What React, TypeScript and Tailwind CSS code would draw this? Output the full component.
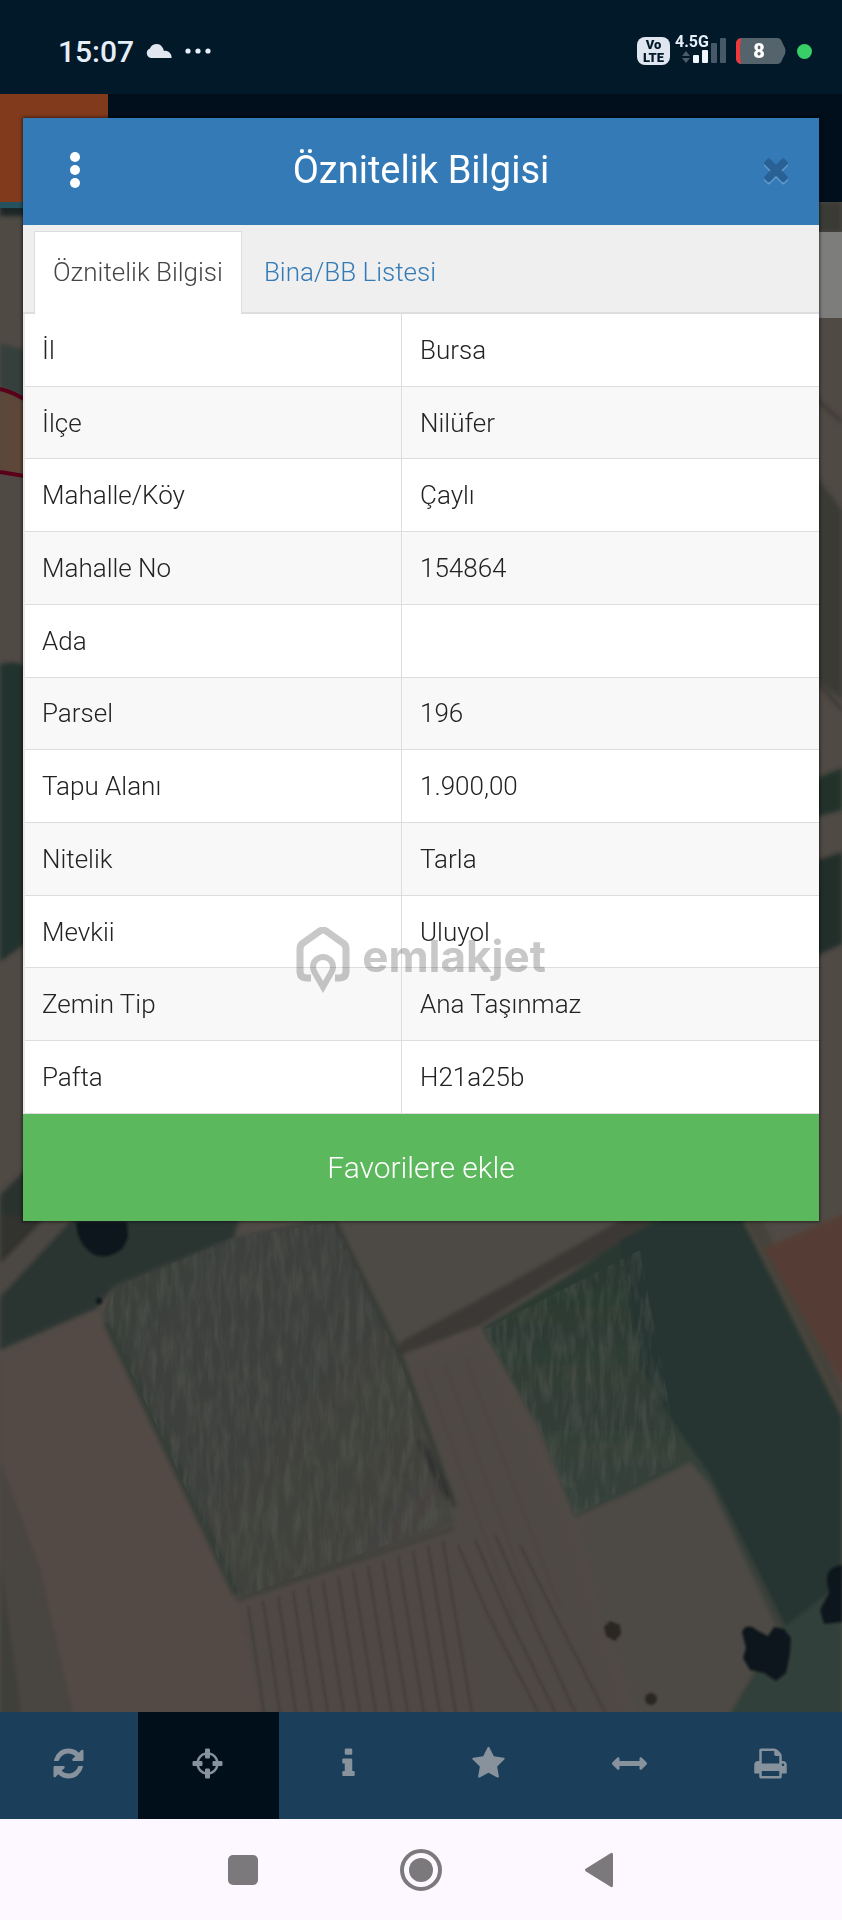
import { useState } from 'react';
import clsx from 'clsx';

const attributes = [
  { label: 'İl', value: 'Bursa' },
  { label: 'İlçe', value: 'Nilüfer' },
  { label: 'Mahalle/Köy', value: 'Çaylı' },
  { label: 'Mahalle No', value: '154864' },
  { label: 'Ada', value: '' },
  { label: 'Parsel', value: '196' },
  { label: 'Tapu Alanı', value: '1.900,00' },
  { label: 'Nitelik', value: 'Tarla' },
  { label: 'Mevkii', value: 'Uluyol' },
  { label: 'Zemin Tip', value: 'Ana Taşınmaz' },
  { label: 'Pafta', value: 'H21a25b' },
];

const tabs = ['Öznitelik Bilgisi', 'Bina/BB Listesi'];

const tools = [
  {
    name: 'Yenile',
    path: 'M1639 1056q0 5-1 7-64 268-268 434.5t-478 166.5q-146 0-282.5-55t-243.5-157l-129 129q-19 19-45 19t-45-19-19-45v-448q0-26 19-45t45-19h448q26 0 45 19t19 45-19 45l-137 137q71 66 161 102t187 36q134 0 250-65t186-179q11-17 53-117 8-23 30-23h192q13 0 22.5 9.5t9.5 22.5zm25-800v448q0 26-19 45t-45 19h-448q-26 0-45-19t-19-45 19-45l138-138q-148-137-349-137-134 0-250 65t-186 179q-11 17-53 117-8 23-30 23h-199q-13 0-22.5-9.5t-9.5-22.5v-7q65-268 270-434.5t480-166.5q146 0 284 55.5t245 156.5l130-129q19-19 45-19t45 19 19 45z',
  },
  {
    name: 'Konum',
    path: 'M1325 1024h-109q-26 0-45-19t-19-45v-128q0-26 19-45t45-19h109q-32-108-112.5-188.5t-188.5-112.5v109q0 26-19 45t-45 19h-128q-26 0-45-19t-19-45v-109q-108 32-188.5 112.5t-112.5 188.5h109q26 0 45 19t19 45v128q0 26-19 45t-45 19h-109q32 108 112.5 188.5t188.5 112.5v-109q0-26 19-45t45-19h128q26 0 45 19t19 45v109q108-32 188.5-112.5t112.5-188.5zm339-192v128q0 26-19 45t-45 19h-143q-37 161-154.5 278.5t-278.5 154.5v143q0 26-19 45t-45 19h-128q-26 0-45-19t-19-45v-143q-161-37-278.5-154.5t-154.5-278.5h-143q-26 0-45-19t-19-45v-128q0-26 19-45t45-19h143q37-161 154.5-278.5t278.5-154.5v-143q0-26 19-45t45-19h128q26 0 45 19t19 45v143q161 37 278.5 154.5t154.5 278.5h143q26 0 45 19t19 45z',
  },
  {
    name: 'Bilgi',
    path: 'M1216 1344v128q0 26-19 45t-45 19h-512q-26 0-45-19t-19-45v-128q0-26 19-45t45-19h64v-384h-64q-26 0-45-19t-19-45v-128q0-26 19-45t45-19h384q26 0 45 19t19 45v576h64q26 0 45 19t19 45zm-128-1152v192q0 26-19 45t-45 19h-256q-26 0-45-19t-19-45v-192q0-26 19-45t45-19h256q26 0 45 19t19 45z',
  },
  {
    name: 'Favoriler',
    path: 'M1728 647q0 22-26 48l-363 354 86 500q1 7 1 20 0 21-10.5 35.5t-30.5 14.5q-19 0-40-12l-449-236-449 236q-22 12-40 12-21 0-31.5-14.5t-10.5-35.5q0-6 2-20l86-500-364-354q-25-27-25-48 0-37 56-46l502-73 225-455q19-41 49-41t49 41l225 455 502 73q56 9 56 46z',
  },
  {
    name: 'Ölçüm',
    path: 'M1792 896q0 26-19 45l-256 256q-19 19-45 19t-45-19-19-45v-128h-1024v128q0 26-19 45t-45 19-45-19l-256-256q-19-19-19-45t19-45l256-256q19-19 45-19t45 19 19 45v128h1024v-128q0-26 19-45t45-19 45 19l256 256q19 19 19 45z',
  },
  {
    name: 'Yazdır',
    path: 'M448 1536h896v-256h-896v256zm0-640h896v-384h-160q-40 0-68-28t-28-68v-160h-640v640zm1152 64q0-26-19-45t-45-19-45 19-19 45 19 45 45 19 45-19 19-45zm128 0v416q0 13-9.5 22.5t-22.5 9.5h-224v160q0 40-28 68t-68 28h-960q-40 0-68-28t-28-68v-160h-224q-13 0-22.5-9.5t-9.5-22.5v-416q0-79 56.5-135.5t135.5-56.5h64v-544q0-40 28-68t68-28h672q40 0 88 20t76 48l152 152q28 28 48 76t20 88v256h64q79 0 135.5 56.5t56.5 135.5z',
  },
];

const closePath =
  'M1490 1322q0 40-28 68l-136 136q-28 28-68 28t-68-28l-294-294-294 294q-28 28-68 28t-68-28l-136-136q-28-28-28-68t28-68l294-294-294-294q-28-28-28-68t28-68l136-136q28-28 68-28t68 28l294 294 294-294q28-28 68-28t68 28l136 136q28 28 28 68t-28 68l-294 294 294 294q28 28 28 68z';

function StatusBar() {
  return (
    <div className="flex h-[94px] items-center bg-[#011929] pt-2 pr-[30px] pl-[58px] text-[#e6eef8]">
      <span className="text-[30px] font-medium">15:07</span>
      <svg className="ml-3 h-4 w-[26px]" viewBox="0 0 26 16" fill="#e2e7ef">
        <path d="M5 15a5 5 0 0 1-1-9.600A7 7 0 0 1 16.500 4.500c.8 1 1.100 2.100 1.200 3.300A6.500 6.500 0 0 1 25.500 15z" />
      </svg>
      <svg className="ml-3 h-2 w-7" viewBox="0 0 28 8" fill="currentColor">
        <circle cx="4" cy="4" r="2.600" />
        <circle cx="14" cy="4" r="2.600" />
        <circle cx="24" cy="4" r="2.600" />
      </svg>

      <div className="ml-auto flex items-center">
        <div className="flex h-7 w-[33px] flex-col items-center justify-center rounded-lg bg-[#dfe6ef] text-[13px] leading-[13px] font-black text-[#011929]">
          <span>Vo</span>
          <span>LTE</span>
        </div>
        <div className="relative ml-1 h-8 w-[54px]">
          <span className="absolute -top-px left-px text-[16px] leading-4 font-bold">4.5G</span>
          <svg className="h-8 w-[54px]" viewBox="0 0 54 32">
            <path d="M8 21l4-5 4 5zM8 23l4 5 4-5z" fill="#4b5d6a" />
            <rect x="19" y="20" width="6" height="8" rx="1" fill="#f1f6fc" />
            <rect x="28" y="15" width="6" height="13" rx="1" fill="#f1f6fc" />
            <rect x="37" y="8" width="6" height="20" rx="1" fill="#475966" />
            <rect x="46" y="3" width="6" height="25" rx="1" fill="#475966" />
          </svg>
        </div>
        <div className="relative ml-2 h-[26px] w-[50px]">
          <svg className="h-[26px] w-[50px]" viewBox="0 0 50 26">
            <path d="M6 0h35q4 0 5 4l3 6q1 3 0 6l-3 6q-1 4-5 4H6q-6 0-6-6V6q0-6 6-6z" fill="#55636d" />
            <path d="M5 0q-5 1-5 6v14q0 5 5 6-2-13 0-26z" fill="#f0383b" />
          </svg>
          <span className="absolute inset-0 pr-1 text-center text-[20px] leading-[26px] font-black text-white">8</span>
        </div>
        <span className="ml-[11px] size-[15px] rounded-full bg-[#37cf66]" />
      </div>
    </div>
  );
}

// aerial view of the parcels, already dimmed by the modal overlay
function ParcelMap() {
  return (
    <svg className="absolute inset-0 size-full" viewBox="0 202 842 1510" preserveAspectRatio="none">
      <defs>
        <filter id="soft" x="-5%" y="-5%" width="110%" height="110%">
          <feGaussianBlur stdDeviation="2" />
        </filter>
        <filter id="edge" x="-5%" y="-5%" width="110%" height="110%">
          <feGaussianBlur stdDeviation="1" />
        </filter>
        <filter id="grain" x="0" y="0" width="100%" height="100%" colorInterpolationFilters="sRGB">
          <feTurbulence type="fractalNoise" baseFrequency="0.14 0.03" numOctaves="4" seed="4" />
          <feColorMatrix values="0 0 0 0 0.36  0 0 0 0 0.37  0 0 0 0 0.34  2.4 0 0 0 -0.9" />
        </filter>
        <clipPath id="crops">
          <path d="M115 1287L235 1237 335 1222 400 1360 455 1520 237 1598 105 1315z" />
          <path d="M484 1330L640 1250 680 1462 575 1515 540 1430z" />
        </clipPath>
        <linearGradient id="dryCrop" x1="0" y1="0" x2="1" y2="1">
          <stop offset="0" stopColor="#3a403b" />
          <stop offset="0.5" stopColor="#3e413d" />
          <stop offset="1" stopColor="#474540" />
        </linearGradient>
        <linearGradient id="greenCrop" x1="0" y1="0" x2="0" y2="1">
          <stop offset="0" stopColor="#28372f" />
          <stop offset="0.5" stopColor="#35403a" />
          <stop offset="1" stopColor="#403f3a" />
        </linearGradient>
      </defs>
      <rect y="202" width="842" height="1510" fill="#504a45" />

      <g filter="url(#soft)">
        {/* left edge */}
        <path d="M0 202h30v14H0z" fill="#1b2528" />
        <path d="M0 343l30 8v50L0 388z" fill="#36413c" />
        <path d="M0 389l30 15v73l-30-5z" fill="#5d4638" />
        <path d="M0 664q20-5 30 6v270L0 962z" fill="#24332f" />
        <path d="M0 1195l30-30v60H0z" fill="#2b322e" />

        {/* right edge */}
        <path d="M812 202h30v30h-30z" fill="#3a3a34" />
        <path d="M812 470l30 40v190l-30-25z" fill="#3b3b36" />
        <path d="M812 780l30-12v42l-30 8z" fill="#23322c" />
        <path d="M812 862l30-10v92l-30 14z" fill="#232f2a" />
        <path d="M812 395l30 27M812 676l30 34" stroke="#383430" strokeWidth="3" />

        {/* lower fields */}
        <path d="M0 1215h55L0 1268z" fill="#30312e" />
        <path d="M48 1215h32l-26 38L0 1302v-38z" fill="#4b4743" />
        <path d="M76 1215h165l-8 25-118 45-18 23-97 42v-53z" fill="#2c3531" />
        <path d="M0 1355l97-40 16 20 126 269 26 115H70L0 1460z" fill="#534a44" />
        <path d="M0 1460l40 110 34 150H0z" fill="#494540" />
        <path d="M0 1560l22 160H0z" fill="#3f413b" />
        <path d="M115 1285l120-48 100-22 65 145 57 162-220 80-134-287z" fill="url(#dryCrop)" />
        <path d="M335 1215h330l-265 135z" fill="#4e4945" />
        <path d="M400 1342l100-54 130-73h50l-120 60-80 50-80 30z" fill="#3b3835" />
        <path d="M403 1362l77-32 90 190 60 200H262l-22-117 217-75z" fill="#504a45" />
        <path d="M482 1328l85-52 95-61h83l97 195v310h-60l-10-85-80-170-117 52-35-87z" fill="url(#greenCrop)" />
        <path d="M620 1240l60-25h65l97 195v180l-50 50-82-165-35-50-35-60z" fill="#273530" />
        <path d="M742 1215h18l82 175v28z" fill="#44423a" />
        <path d="M764 1248l84-36v178l-8-10z" fill="#543e36" />
        <path d="M577 1519l113-57 20 23 68 145 6 82-50 10H640l-40-110z" fill="#4e4a45" />
        <path d="M778 1632l64-50v140H725z" fill="#33413a" />
        <path d="M335 1222l66 135 54 150" fill="none" stroke="#363a35" strokeWidth="5" />
        <path d="M107 1322l130 272" fill="none" stroke="#353c37" strokeWidth="9" />
        <path d="M420 1440l28 58" fill="none" stroke="#303330" strokeWidth="8" />
        <path d="M238 1600l217-72" fill="none" stroke="#403f3a" strokeWidth="4" />
        <path d="M745 1222l97 190" fill="none" stroke="#524d40" strokeWidth="2" />
      </g>

      <rect x="100" y="1215" width="660" height="390" filter="url(#grain)" clipPath="url(#crops)" opacity="0.4" />

      {/* plough lines */}
      <g fill="none" stroke="#3f3a36" strokeWidth="2" opacity="0.8" filter="url(#edge)">
        {Array.from({ length: 14 }, (_, i) => (
          <path key={i} d={`M${248 + i * 15} ${1606 - i * 5}q8 50 ${16 + i} ${108 + i * 5}`} />
        ))}
        <path d="M458 1545l30 70 50 97M475 1540l35 80 45 92M495 1535l40 90 40 87M520 1545l40 80 45 87" />
      </g>
      <g fill="none" stroke="#47413d" strokeWidth="2" opacity="0.5" filter="url(#edge)">
        <path d="M425 1370l90 250M445 1365l90 250M465 1358l95 250" />
      </g>

      <g fill="#0f181a" filter="url(#edge)">
        <path d="M76 1222h51l1 14q-3 14-14 18-14 6-24-2-13-10-14-30z" />
        <path d="M742 1632q3-7 10-5l8 5 8 4 6-9 10 2 7 9-1 15-4 20-10 8-12-8-14-3-7-12 3-10z" />
        <path d="M842 1565q-16 2-15 16l2 12-9 17 4 14 18-2z" />
        <circle cx="99" cy="1301" r="3" />
      </g>
      <g fill="#2a2823" filter="url(#edge)">
        <path d="M604 1627l6-6 10 4 1 9-6 7-9-5z" />
        <circle cx="651" cy="1699" r="6" />
      </g>
      <path d="M0 389q14 3 30 14M0 472l30 5" fill="none" stroke="#5a0018" strokeWidth="4" />
      <path d="M812 232h30v86h-30z" fill="#7d7d7b" />
      <path d="M0 202h108v6H0z" fill="#26515f" />
    </svg>
  );
}

function Watermark() {
  return (
    <div className="pointer-events-none absolute inset-0 flex items-center justify-center gap-3 text-[#c8c8c8] mix-blend-multiply">
      <svg className="h-[66px] w-[54px]" viewBox="0 0 54 66" fill="none" stroke="currentColor" strokeWidth="7">
        <path d="M15 51h-4q-7 0-7-7V22q0-4 3-6L24 4q3-2 6 0l17 12q3 2 3 6v22q0 7-7 7h-4" />
        <path d="M27 60L19 46q-2-3-2-6a10 10 0 0 1 20 0q0 3-2 6z" strokeWidth="6" />
      </svg>
      <span className="pb-2 font-[Inter,sans-serif] text-[44px] leading-[56px] font-bold">emlakjet</span>
    </div>
  );
}

export default function App() {
  const [activeTab, setActiveTab] = useState(tabs[0]);

  return (
    <div className="relative flex min-h-screen flex-col font-[Roboto,sans-serif]">
      <StatusBar />

      <div className="grid flex-1">
        <div className="col-start-1 row-start-1 flex flex-col">
          <header className="flex h-[108px] bg-[#000f1b]">
            <div className="w-[108px] bg-[#813b1c]" />
          </header>
          <div className="relative flex-1">
            <ParcelMap />
          </div>
          <nav className="grid h-[107px] grid-cols-[138px_repeat(5,1fr)] bg-[#1b3e5b]">
            {tools.map((tool) => (
              <button
                key={tool.name}
                aria-label={tool.name}
                className={clsx('flex items-center justify-center pr-[2px] pb-1 text-[#87929c]', tool.name === 'Konum' && 'bg-[#000f19]')}
              >
                <svg className="size-[35px]" viewBox="0 0 1792 1792" fill="currentColor">
                  <path d={tool.path} />
                </svg>
              </button>
            ))}
          </nav>
        </div>

        <section className="relative col-start-1 row-start-1 mx-[23px] mt-6 self-start bg-white shadow-[0_0_3px_1px_rgba(0,0,0,0.5)]">
          <header className="grid h-[107px] grid-cols-[104px_1fr_104px] items-center bg-[#337ab7] pb-1">
            <button aria-label="Menü" className="flex justify-center">
              <svg className="h-9 w-[10px]" viewBox="0 0 10 36" fill="#fff">
                <circle cx="5" cy="5" r="5" />
                <circle cx="5" cy="18" r="5" />
                <circle cx="5" cy="31" r="5" />
              </svg>
            </button>
            <h1 className="pt-[2px] text-center text-[38px] text-white">Öznitelik Bilgisi</h1>
            <button aria-label="Kapat" className="flex justify-end pr-[25px]">
              <svg className="size-9" viewBox="0 50 1792 1792">
                <path d={closePath} fill="#5f9acd" transform="translate(0 110)" />
                <path d={closePath} fill="#296195" />
              </svg>
            </button>
          </header>

          <div role="tablist" className="flex h-[89px] border-b-2 border-[#dddddd] bg-[#efeff0] pt-[6px] pl-[11px]">
            {tabs.map((tab) => (
              <button
                key={tab}
                role="tab"
                aria-selected={tab === activeTab}
                onClick={() => setActiveTab(tab)}
                className={clsx(
                  '-mb-[2px] border-x border-t px-[18px] pb-[2px] text-[26px] font-light',
                  tab === activeTab
                    ? 'mr-[3px] border-[#dddddd] bg-white text-[#444444]'
                    : 'border-transparent text-[#337ab7]'
                )}
              >
                {tab}
              </button>
            ))}
          </div>

          <table className="h-[800px] w-full table-fixed border-separate border-spacing-0 border-l-2 border-[#e8e8e8] text-left text-[26px] leading-8 text-[#222222]">
            <tbody>
              {attributes.map((row) => (
                <tr key={row.label} className="bg-white even:bg-[#f8f8f8]">
                  <th scope="row" className="w-[377px] border-r border-b border-[#dddddd] px-[17px] font-light">
                    {row.label}
                  </th>
                  <td className="border-b border-[#dddddd] px-[18px] font-light">{row.value}</td>
                </tr>
              ))}
            </tbody>
          </table>

          <button className="flex h-[107px] w-full items-center justify-center bg-[#5cb85c] text-[30px] font-light text-white">
            Favorilere ekle
          </button>
        </section>
      </div>

      <nav className="flex h-[101px] items-center justify-center gap-[136px] bg-[#fdf8ff] text-[#7c797c]">
        <button aria-label="Son uygulamalar" className="flex w-[42px] justify-center">
          <span className="size-[30px] rounded-[5px] bg-current" />
        </button>
        <button aria-label="Ana ekran">
          <svg className="size-[42px]" viewBox="0 0 42 42">
            <circle cx="21" cy="21" r="19" fill="none" stroke="currentColor" strokeWidth="4" />
            <circle cx="21" cy="21" r="12" fill="currentColor" />
          </svg>
        </button>
        <button aria-label="Geri" className="flex w-[42px] justify-center">
          <svg className="h-9 w-[30px]" viewBox="0 0 30 36" fill="currentColor">
            <path d="M2 16.500L27 1q2-1 2 2v30q0 3-2 2L2 19.500q-2-1.500 0-3z" />
          </svg>
        </button>
      </nav>

      <Watermark />
    </div>
  );
}
